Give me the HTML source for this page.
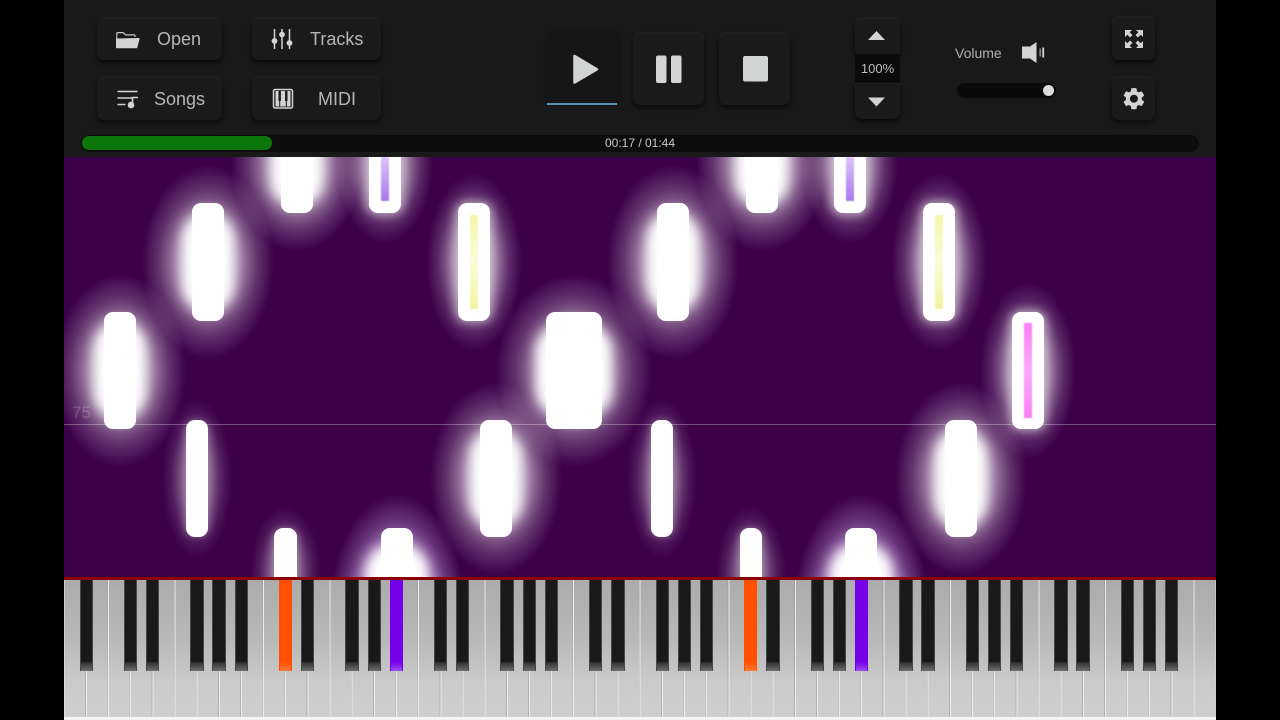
<!DOCTYPE html>
<html lang="en"><head><meta charset="utf-8"><title>Piano</title>
<style>
html,body{margin:0;padding:0;background:#000;width:1280px;height:720px;overflow:hidden}
*{box-sizing:border-box}
#app{position:absolute;left:64px;top:0;width:1152px;height:720px;overflow:hidden;background:#191919;font-family:"Liberation Sans",sans-serif}
.abs{position:absolute}
.btn{position:absolute;background:#1a1a1a;border-radius:7px;box-shadow:0 3px 5px rgba(0,0,0,.6),0 -1px 1px rgba(255,255,255,.04),inset 0 1px 1px rgba(255,255,255,.03)}
.lbl{position:absolute;color:#b6b6b6;font-size:18px;line-height:22px;white-space:nowrap}
#canvas{position:absolute;left:0;top:157px;width:1152px;height:420px;background:#3c0049;overflow:hidden;isolation:isolate}
.n{position:absolute;background:#fff;border-radius:9px;width:32px}
.n::before,.n::after{content:"";position:absolute;z-index:-1}
.g1::before{left:-32px;right:-32px;top:-30px;bottom:-30px;background:radial-gradient(closest-side,rgba(255,255,255,.75) 0,rgba(255,255,255,.48) 45%,rgba(255,255,255,.16) 75%,rgba(255,255,255,0) 100%)}
.g1::after{left:-3px;right:-3px;top:-2px;bottom:-2px;background:#fff;opacity:.5;border-radius:11px;filter:blur(5px)}
.s::before{left:-24px;right:-24px;top:-22px;bottom:-22px;background:radial-gradient(closest-side,rgba(255,255,255,.5) 0,rgba(255,255,255,.3) 45%,rgba(255,255,255,.1) 75%,rgba(255,255,255,0) 100%)}
.s::after{left:-2px;right:-2px;top:0;bottom:0;background:#fff;opacity:.3;border-radius:11px;filter:blur(4px)}
.g2::before{left:-50px;right:-50px;top:-38px;bottom:-38px;background:radial-gradient(closest-side,rgba(255,255,255,.9) 0,rgba(255,255,255,.55) 45%,rgba(255,255,255,.2) 75%,rgba(255,255,255,0) 100%)}
.g2::after{left:-10px;right:-10px;top:7%;bottom:7%;background:#fff;border-radius:50%/30%;filter:blur(6px)}
.pg::before{left:-52px;right:-52px;top:-34px;bottom:-110px;background:radial-gradient(closest-side,rgba(235,215,255,.95) 0,rgba(230,205,255,.7) 50%,rgba(225,195,255,.25) 78%,rgba(225,195,255,0) 100%)}
.pg::after{left:-15px;right:-15px;top:16px;bottom:-40px;background:#fff;border-radius:28px 28px 0 0;filter:blur(6px)}
.i{position:absolute;width:8px;filter:blur(.5px)}
#keys{position:absolute;left:0;top:580px;width:1152px;height:140px;background:#f4f4f4;filter:blur(.3px)}
#wh{position:absolute;left:0;top:0;right:0;height:137px;background:linear-gradient(#ababab 0,#b9b9b9 45%,#cbcbcb 75%,#cfcfcf 100%)}
#sep{position:absolute;left:-1px;top:0;width:1154px;height:137px;background:repeating-linear-gradient(90deg,rgba(125,125,125,.35) 0,rgba(125,125,125,.35) .7px,#ececec .7px,#ececec 1.7px,transparent 1.7px,transparent 22.154px)}
.k{position:absolute;top:0;width:13.4px;height:91px;background:#191919;border-left:1.4px solid #484848;border-right:1.4px solid #484848}
.k::after{content:"";position:absolute;left:0;right:0;bottom:0;height:9px;background:linear-gradient(#2c2c2c,#707070)}
.o{background:#ff5000;border-color:#ff5000}.o::after{background:linear-gradient(#ff5000,#ff7a38)}
.p{background:#7300e6;border-color:#7300e6}.p::after{background:linear-gradient(#7300e6,#9a50f0)}
</style></head><body>
<div id="app">
<div class="btn" style="left:33px;top:18px;width:125px;height:42px"></div>
<div class="btn" style="left:33px;top:77px;width:125px;height:43px"></div>
<div class="btn" style="left:188px;top:18px;width:129px;height:42px"></div>
<div class="btn" style="left:188px;top:77px;width:129px;height:43px"></div>
<div class="lbl" style="left:93px;top:28px">Open</div>
<div class="lbl" style="left:90px;top:88px">Songs</div>
<div class="lbl" style="left:246px;top:28px">Tracks</div>
<div class="lbl" style="left:254px;top:88px">MIDI</div>

<div class="abs" style="left:483px;top:32px;width:73px;height:73px;background:#161616;border-radius:7px;box-shadow:0 0 4px rgba(0,0,0,.35)"></div>
<div class="abs" style="left:483px;top:103px;width:70px;height:2px;background:#5c93b5"></div>
<div class="btn" style="left:569px;top:33px;width:71px;height:72px"></div>
<div class="btn" style="left:655px;top:33px;width:71px;height:72px"></div>

<div class="btn" style="left:791px;top:18px;width:45px;height:36px;border-radius:7px 7px 0 0"></div>
<div class="abs" style="left:791px;top:54px;width:45px;height:29px;background:#0b0b0b;color:#bcbcbc;font-size:13px;line-height:30px;text-align:center">100%</div>
<div class="btn" style="left:791px;top:83px;width:45px;height:36px;border-radius:0 0 7px 7px"></div>

<div class="lbl" style="left:891px;top:43px;font-size:14px;line-height:20px;color:#aeaeae">Volume</div>
<div class="abs" style="left:893px;top:83px;width:99px;height:15px;border-radius:8px;background:#0a0a0a"></div>
<div class="abs" style="left:979px;top:85px;width:11px;height:11px;border-radius:50%;background:#dcdcdc"></div>

<div class="btn" style="left:1048px;top:17px;width:43px;height:43px"></div>
<div class="btn" style="left:1048px;top:77px;width:43px;height:43px"></div>

<div class="abs" style="left:17px;top:135px;width:1118px;height:17px;border-radius:9px;background:#0c0c0c"></div>
<div class="abs" style="left:18px;top:136px;width:190px;height:14px;border-radius:7px;background:#0b770b"></div>
<div class="abs" style="left:17px;top:135px;width:1118px;height:17px;color:#c8c8c8;font-size:12px;line-height:17px;text-align:center">00:17 / 01:44</div>

<svg class="abs" style="left:-64px;top:0" width="1280" height="160" viewBox="0 0 1280 160" fill="#d2d4d4">
 <path d="M116.800 46V33.600a1 1 0 0 1 1-1h5.500l2.200 2.300h8.500a1 1 0 0 1 1 1V37" fill="none" stroke="#c4c6c6" stroke-width="1.200"/>
 <path d="M116 47.800V39.500a1 1 0 0 1 1-1l21.500-.5a1 1 0 0 1 1 1.200l-2.200 8.300a1 1 0 0 1-1 .8H117a1 1 0 0 1-1-.5z"/>
 <g stroke="#d2d4d4" stroke-width="1.500" fill="none"><path d="M274.500 29v20M282 29v20M289.500 29v20"/></g>
 <circle cx="274.500" cy="41" r="2.900"/><circle cx="282" cy="34.500" r="2.900"/><circle cx="289.500" cy="43" r="2.900"/>
 <g stroke="#d2d4d4" stroke-width="1.600" fill="none"><path d="M117.500 91.500h20M117.500 98h14.500M117.500 104.500h8"/><path d="M132.500 105v-7.500h5.500"/></g>
 <circle cx="131" cy="105" r="3.300"/>
 <rect x="273.500" y="89.500" width="19" height="18.500" rx="1.500" fill="#191919" stroke="#d2d4d4" stroke-width="1.500"/>
 <rect x="275.500" y="91" width="15" height="15.500"/>
 <path d="M279.700 91v10M286.300 91v10" stroke="#191919" stroke-width="2.400"/>
 <path d="M279.700 101v5.500M286.300 101v5.500" stroke="#191919" stroke-width="1"/>

 <path d="M574.500 56v26.500l22.500-13.200z" stroke="#d2d4d4" stroke-width="2.500" stroke-linejoin="round"/>
 <rect x="656" y="55.500" width="10.500" height="27.500" rx="2"/><rect x="671" y="55.500" width="10.500" height="27.500" rx="2"/>
 <rect x="743" y="56" width="25" height="25.500" rx="2"/>
 <path d="M868 40l8.500-9 8.500 9z"/><path d="M868 97.500h17l-8.500 9z"/>

 <path d="M1022 46.500h8l6.500-4.500v21l-6.500-4.500h-8z"/>
 <rect x="1039.500" y="48.500" width="1.300" height="8" opacity=".7"/><rect x="1042.300" y="47.500" width="1.800" height="10"/>
 <g>
  <path d="M1125 30h7l-2.300 2.300 2.800 2.800-2.400 2.400-2.800-2.800-2.300 2.300z"/>
  <path d="M1143 30h-7l2.300 2.300-2.800 2.800 2.400 2.400 2.800-2.800 2.300 2.300z"/>
  <path d="M1125 48h7l-2.300-2.300 2.800-2.800-2.400-2.400-2.800 2.800-2.300-2.300z"/>
  <path d="M1143 48h-7l2.300-2.300-2.800-2.800 2.400-2.400 2.800 2.800 2.300-2.300z"/>
 </g>
 <path transform="translate(1120.700 85.500) scale(1.100)" d="M19.140 12.940c.04-.3.06-.61.06-.94 0-.32-.02-.64-.07-.94l2.030-1.580a.49.49 0 0 0 .12-.61l-1.920-3.320a.488.488 0 0 0-.59-.22l-2.390.96c-.5-.38-1.030-.7-1.620-.94l-.36-2.540a.484.484 0 0 0-.48-.41h-3.840c-.24 0-.43.17-.47.41l-.36 2.540c-.59.24-1.130.57-1.620.94l-2.390-.96c-.22-.08-.47 0-.59.22L2.740 8.870c-.12.21-.08.47.12.61l2.030 1.580c-.05.3-.09.63-.09.94s.02.64.07.94l-2.030 1.580a.49.49 0 0 0-.12.61l1.920 3.320c.12.22.37.29.59.22l2.390-.96c.5.38 1.030.7 1.620.94l.36 2.540c.05.24.24.41.48.41h3.840c.24 0 .44-.17.47-.41l.36-2.540c.59-.24 1.130-.56 1.620-.94l2.390.96c.22.08.47 0 .59-.22l1.920-3.320c.12-.22.07-.47-.12-.61l-2.010-1.580zM12 15.600c-1.980 0-3.600-1.620-3.600-3.600s1.620-3.600 3.600-3.600 3.600 1.620 3.600 3.600-1.620 3.600-3.600 3.600z"/>
</svg>

<div id="canvas">
 <div class="n g2" style="left:217px;top:-40px;height:96px"></div>
 <div class="n g1" style="left:305px;top:-40px;height:96px"></div>
 <div class="n g2" style="left:682px;top:-40px;height:96px"></div>
 <div class="n g1" style="left:770px;top:-40px;height:96px"></div>

 <div class="n g2" style="left:128px;top:46px;height:118px"></div>
 <div class="n g1" style="left:394px;top:46px;height:118px"></div>
 <div class="n g2" style="left:593px;top:46px;height:118px"></div>
 <div class="n g1" style="left:859px;top:46px;height:118px"></div>

 <div class="n g2" style="left:40px;top:155px;height:117px"></div>
 <div class="n g2" style="left:482px;top:155px;height:117px;width:56px"></div>
 <div class="n g1" style="left:948px;top:155px;height:117px"></div>

 <div class="n s" style="left:122px;top:263px;height:117px;width:22px"></div>
 <div class="n g2" style="left:416px;top:263px;height:117px"></div>
 <div class="n s" style="left:587px;top:263px;height:117px;width:22px"></div>
 <div class="n g2" style="left:881px;top:263px;height:117px"></div>

 <div class="n s" style="left:210px;top:371px;height:90px;width:23px"></div>
 <div class="n g2 pg" style="left:317px;top:371px;height:90px"></div>
 <div class="n s" style="left:676px;top:371px;height:90px;width:22px"></div>
 <div class="n g2 pg" style="left:781px;top:371px;height:90px"></div>

 <div class="i" style="left:317px;top:0;height:44px;background:linear-gradient(#dcc4f8,#a877ee)"></div>
 <div class="i" style="left:782px;top:0;height:44px;background:linear-gradient(#dcc4f8,#a877ee)"></div>
 <div class="i" style="left:406px;top:58px;height:94px;background:linear-gradient(#f4f6a8,#fbfcd8 50%,#f2f4a0)"></div>
 <div class="i" style="left:871px;top:58px;height:94px;background:linear-gradient(#f4f6a8,#fbfcd8 50%,#f2f4a0)"></div>
 <div class="i" style="left:960px;top:166px;height:95px;background:linear-gradient(#fb80f6,#fca8fa 50%,#fa80f4)"></div>

 <div class="abs" style="left:0;top:267px;width:1152px;height:1px;background:rgba(255,255,255,.3)"></div>
 <div class="abs" style="left:8px;top:246px;color:rgba(255,255,255,.2);font-size:17px;line-height:20px">75</div>
</div>

<div class="abs" style="left:0;top:577px;width:1152px;height:3px;background:#8a0000"></div>

<div id="keys">
 <div id="wh"></div><div id="sep"></div>
 <div class="k" style="left:15.5px"></div>
 <div class="k" style="left:59.8px"></div>
 <div class="k" style="left:81.9px"></div>
 <div class="k" style="left:126.2px"></div>
 <div class="k" style="left:148.4px"></div>
 <div class="k" style="left:170.5px"></div>
 <div class="k o" style="left:214.8px"></div>
 <div class="k" style="left:237px"></div>
 <div class="k" style="left:281.3px"></div>
 <div class="k" style="left:303.5px"></div>
 <div class="k p" style="left:325.6px"></div>
 <div class="k" style="left:369.9px"></div>
 <div class="k" style="left:392.1px"></div>
 <div class="k" style="left:436.4px"></div>
 <div class="k" style="left:458.5px"></div>
 <div class="k" style="left:480.7px"></div>
 <div class="k" style="left:525px"></div>
 <div class="k" style="left:547.2px"></div>
 <div class="k" style="left:591.5px"></div>
 <div class="k" style="left:613.6px"></div>
 <div class="k" style="left:635.8px"></div>
 <div class="k o" style="left:680.1px"></div>
 <div class="k" style="left:702.2px"></div>
 <div class="k" style="left:746.5px"></div>
 <div class="k" style="left:768.7px"></div>
 <div class="k p" style="left:790.8px"></div>
 <div class="k" style="left:835.2px"></div>
 <div class="k" style="left:857.3px"></div>
 <div class="k" style="left:901.6px"></div>
 <div class="k" style="left:923.8px"></div>
 <div class="k" style="left:945.9px"></div>
 <div class="k" style="left:990.2px"></div>
 <div class="k" style="left:1012.4px"></div>
 <div class="k" style="left:1056.7px"></div>
 <div class="k" style="left:1078.9px"></div>
 <div class="k" style="left:1101px"></div>
</div>
</div>
</body></html>
